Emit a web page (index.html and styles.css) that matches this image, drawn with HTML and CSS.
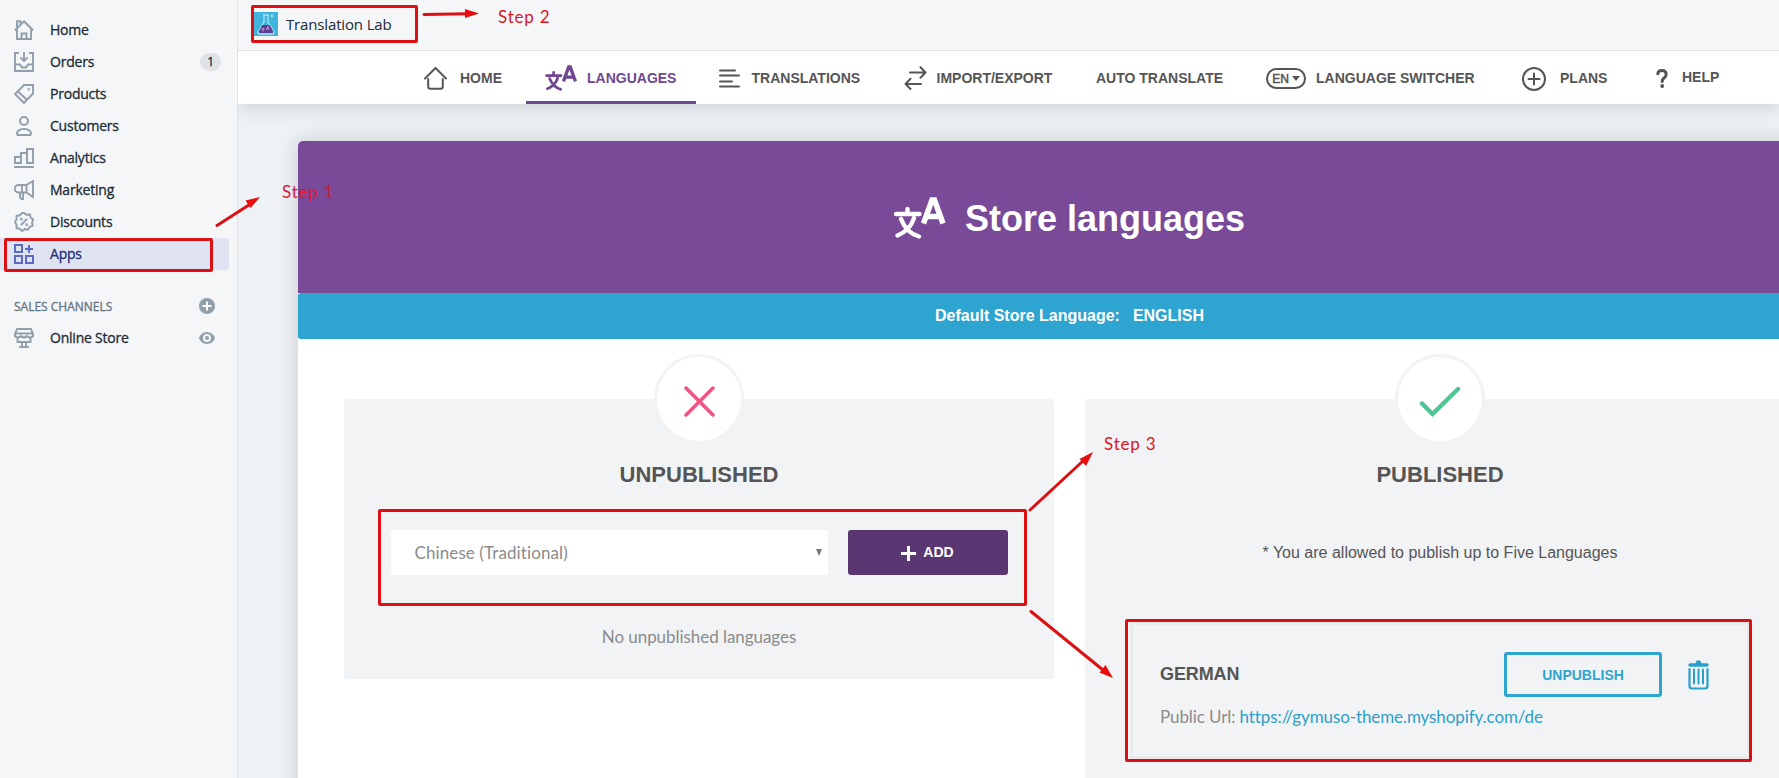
FILE: index.html
```html
<!DOCTYPE html>
<html lang="en">
<head>
<meta charset="utf-8">
<title>Translation Lab</title>
<link rel="stylesheet" href="styles.css">
</head>
<body>
<div class="app">
  <aside class="sidebar">
    <ul class="menu">
      <li><svg class="ico" viewBox="0 0 20 20"><path d="M.8 10.500 10 1.300l9.200 9.200M3 9.500V19h14V9.500M7.500 19v-5.500h5V19M3 7.500V1.200h3.500V4"/></svg><span>Home</span></li>
      <li><svg class="ico" viewBox="0 0 20 20"><path d="M5 1H1v18h18V1h-4M1 12.500h5l2 3h4l2-3h5M10 0v8.500M6.500 5.500 10 9l3.500-3.500"/></svg><span>Orders</span><b class="count">1</b></li>
      <li><svg class="ico" viewBox="0 0 20 20"><path d="M10 1h9v8.500L10 19l-9-9zM4 7.500l9 8.500"/><circle cx="14.800" cy="5.300" r=".4"/></svg><span>Products</span></li>
      <li><svg class="ico" viewBox="0 0 20 20"><circle cx="10" cy="5" r="4"/><path d="M3.500 19c-2-4 3-6 6.500-6s8.500 2 6.500 6z"/></svg><span>Customers</span></li>
      <li><svg class="ico" viewBox="0 0 20 20"><path d="M1 15V9h6v6zM7 15V5h6v10M13 15V1h6v14zM0 19h20"/></svg><span>Analytics</span></li>
      <li><svg class="ico" viewBox="0 0 20 20"><path d="M12.500 5H4.500a3.700 3.700 0 0 0 0 7.500h8L19 17V1zM12.500 5v7.500M6 13v3.500q0 2.500 2.500 2.500H9v-6M8 5v7.500"/></svg><span>Marketing</span></li>
      <li><svg class="ico" viewBox="0 0 20 20"><path d="m10 1 2.600 1.800 3.200-.2.900 3.100 2.500 2-1.100 2.800.6 3.200-3 1.200-1.700 2.800-3.100-.6L8 19l-2.300-2.300-3.200-.6.100-3.200L.900 10l1.700-2.700-.1-3.300 3.200-.7L8 1z"/><path d="m6.800 13.200 6.400-6.400"/><circle cx="7.300" cy="7.300" r=".5"/><circle cx="12.700" cy="12.700" r=".5"/></svg><span>Discounts</span></li>
      <li class="active"><svg class="ico" viewBox="0 0 20 20"><path d="M1 1h7v7H1zM1 12h7v7H1zM12 12h7v7h-7zM15 1v8M11 5h8"/></svg><span>Apps</span></li>
    </ul>
    <div class="section"><span>SALES CHANNELS</span>
      <svg class="plus" viewBox="0 0 16 16"><circle cx="8" cy="8" r="8"/><path d="M8 3.500v9M3.500 8h9"/></svg></div>
    <ul class="menu">
      <li><svg class="ico" viewBox="0 0 20 20"><path d="M3 1h14l2 5v2q-3 3-6 0-3 3-6 0-3 3-6 0V6zM1 5.500h18M3.500 9.500V14h13V9.500M8 14v5M12 14v5M5 19h10"/></svg><span>Online Store</span>
        <svg class="eye" viewBox="0 0 16 12"><path d="M8 0C4 0 1 3 0 6c1 3 4 6 8 6s7-3 8-6c-1-3-4-6-8-6zm0 10a4 4 0 1 1 0-8 4 4 0 0 1 0 8z"/><circle cx="8" cy="6" r="2"/></svg></li>
    </ul>
  </aside>

  <div class="page">
    <header class="topbar">
      <svg class="logo" viewBox="0 0 24 24"><rect width="24" height="24" fill="#3fb4dc"/><path d="M9 3h6M10 3v7L4 20q0 2 2 2h12q2 0 2-2L14 10V3" fill="none" stroke="#a9e2f5" stroke-width="1.300"/><path d="M8.300 13h7.400l3.500 6.500q0 1.500-1.500 1.500H6.300q-1.500 0-1.500-1.500z" fill="#5b3c94"/><path d="m12.500 18 1.200-3.500 1.300 3.500M7.500 17h3M9 16v3.500" fill="none" stroke="#e3b6ee" stroke-width=".8"/><path d="M18 2.500v3M16.500 4h3" stroke="#b9ebfa"/></svg>
      <span>Translation Lab</span>
    </header>

    <nav class="tabs">
      <a class="tab"><span class="glyph g-home"><svg width="23" height="23" viewBox="0 0 23 23"><path d="m1 11.500 10.500-10.500L22 11.500M4.200 12v7.500q0 2.300 2.300 2.300h10q2.300 0 2.300-2.300V12"/></svg></span>HOME</a>
      <a class="tab current"><span class="glyph g-lang"><svg width="32" height="26" viewBox="0 0 52 42"><use href="#lang"/></svg></span>LANGUAGES</a>
      <a class="tab"><span class="glyph g-lines"><svg width="21" height="19" viewBox="0 0 21 19"><path d="M1 1.500h15M1 6.500h19M1 12.500h12M1 17.500h19"/></svg></span>TRANSLATIONS</a>
      <a class="tab"><span class="glyph g-swap"><svg width="23" height="24" viewBox="0 0 23 24"><path d="M6 6.500h15.500M16.500 1.300l5 5.200-5 5.200M17 18H1.500M6.500 12.800 1.500 18l5 5"/></svg></span>IMPORT/EXPORT</a>
      <a class="tab">AUTO TRANSLATE</a>
      <a class="tab"><span class="glyph g-en"><span class="en">EN<i></i></span></span>LANGUAGE SWITCHER</a>
      <a class="tab"><span class="glyph g-plan"><svg width="24" height="24" viewBox="0 0 24 24"><circle cx="12" cy="12" r="11"/><path d="M12 6.500v11M6.500 12h11"/></svg></span>PLANS</a>
      <a class="tab help"><span class="glyph g-help"><svg width="12" height="19" viewBox="0 0 12 19"><path d="M1.800 4.800Q2 1.500 6 1.500t4.200 3.700Q10.200 7.500 8 9 6.200 10.300 6.200 12.500" stroke-width="3"/><circle class="dot" cx="6.200" cy="17" r="1.900"/></svg></span>HELP</a>
    </nav>

    <main class="card">
      <div class="hero">
        <svg width="53" height="42" viewBox="0 0 52 42"><g id="lang" fill="none" stroke="currentColor" stroke-width="4.400" stroke-linecap="round" stroke-linejoin="round"><path d="M2.500 17h23.500M14 12v5M7.500 22q5.500 14 18 17.500M20.500 21Q17 33 4 38.500"/><path d="M30 26.500 38.500 3h2.500l8.500 23.500M33 19.500h13" stroke-width="5.500" stroke-linecap="butt" stroke-linejoin="miter"/></g></svg>
        <h1>Store languages</h1>
      </div>
      <div class="default"><span>Default Store Language:</span><span>ENGLISH</span></div>

      <div class="columns">
        <section class="panel short">
          <div class="badge no"><svg width="31" height="31" viewBox="0 0 31 31"><path d="m2 2 27 27M29 2 2 29"/></svg></div>
          <h2>UNPUBLISHED</h2>
          <div class="add-row">
            <div class="select"><span>Chinese (Traditional)</span><i></i></div>
            <button class="add"><svg width="15" height="15" viewBox="0 0 15 15"><path d="M7.500 0v15M0 7.500h15"/></svg>ADD</button>
          </div>
          <p class="empty">No unpublished languages</p>
        </section>

        <section class="panel">
          <div class="badge yes"><svg width="42" height="32" viewBox="0 0 42 32"><path d="m3 17.500 10.500 10.500L39 3"/></svg></div>
          <h2>PUBLISHED</h2>
          <p class="note">* You are allowed to publish up to Five Languages</p>
          <div class="language">
            <div class="info">
              <h3>GERMAN</h3>
              <p>Public Url: <a>https://gymuso-theme.myshopify.com/de</a></p>
            </div>
            <button class="unpublish">UNPUBLISH</button>
            <svg class="trash" width="21" height="30" viewBox="0 0 21 30"><path d="M2 5h17" stroke-width="3.400"/><circle cx="10.500" cy="3" r="2.700"/><path d="M1.500 9v17q0 2.500 2.500 2.500h13q2.500 0 2.500-2.500V9" stroke-width="2.200"/><path d="M6 9.500v14M10.500 9.500v14M15 9.500v14" stroke-width="2"/></svg>
          </div>
        </section>
      </div>
    </main>
  </div>

  <div class="frame frame-apps"></div>
  <div class="frame frame-title"></div>
  <div class="frame frame-add"></div>
  <div class="frame frame-german"></div>
  <svg class="arrows" width="1779" height="778" viewBox="0 0 1779 778">
    <path d="M217 225.500 252 203M424 14.500 468 13.700M1030 510 1084 460M1031 611.500 1103 670"/>
    <path class="head" d="m260 197-14.500 3.500 5 7.500zM479 13.500 465 9v9zM1093 452l-13.500 7 6.500 7zM1113 678l-7.500-13-6 7.500z"/>
  </svg>
  <span class="step step1">Step 1</span>
  <span class="step step2">Step 2</span>
  <span class="step step3">Step 3</span>
</div>
</body>
</html>
```
FILE: styles.css
```css
* { box-sizing: border-box; }
body { margin: 0; overflow: hidden; }
h1, h2, h3, p, ul { margin: 0; padding: 0; }
.app {
  position: relative;
  display: flex;
  width: 1779px;
  height: 778px;
  overflow: hidden;
  background: #f4f6f8;
  font-family: "Liberation Sans", sans-serif;
}

/* Sidebar */
.sidebar {
  flex: 0 0 238px;
  padding-top: 14px;
  border-right: 1px solid #dfe3e8;
  font-family: "Open Sans", "Noto Sans", sans-serif;
  color: #212b36;
}
.menu { list-style: none; }
.menu li {
  display: flex;
  align-items: center;
  width: 229px;
  height: 32px;
  padding: 0 14px;
  font-size: 14px;
  font-weight: 400;
  line-height: 20px;
  letter-spacing: -.22px;
  -webkit-text-stroke: .3px currentColor;
}
.menu span { flex: 1; margin-left: 16px; }
.ico {
  width: 20px;
  height: 20px;
  fill: none;
  stroke: #919eab;
  stroke-width: 1.9;
}
.menu .active {
  background: #e0e3f1;
  border-radius: 0 3px 3px 0;
  color: #202e78;
}
.active .ico { stroke: #5c6ac4; stroke-width: 2; fill: none; }
.count {
  width: 21px;
  height: 18px;
  margin-right: -6px;
  border-radius: 9px;
  background: #dfe3e8;
  font-size: 12px;
  font-weight: 500;
  line-height: 18px;
  text-align: center;
}
.section {
  display: flex;
  align-items: center;
  justify-content: space-between;
  height: 32px;
  margin-top: 20px;
  padding: 0 22px 0 14px;
  font-size: 12px;
  -webkit-text-stroke: .3px currentColor;
  color: #637381;
}
.plus { width: 16px; height: 16px; fill: #919eab; }
.plus path { stroke: #fff; stroke-width: 2; }
.eye { width: 16px; height: 12px; fill: #919eab; }

/* Top bar and tabs */
.page { flex: 1; min-width: 0; background: #eef2f5; }
.topbar {
  display: flex;
  align-items: center;
  gap: 8px;
  height: 51px;
  padding: 0 0 3px 16px;
  border-bottom: 1px solid #dfe1e4;
  background: #f4f6f8;
  font-family: "Open Sans", "Noto Sans", sans-serif;
  font-size: 15px;
  letter-spacing: -.15px;
  color: #212b36;
}
.logo { width: 24px; height: 24px; }
.tabs {
  display: grid;
  grid-template-columns: 121px 174px 185px 193px 169px 256px 134px 120px;
  height: 53px;
  padding-left: 167px;
  background: #fff;
  box-shadow: 0 2px 20px rgba(60, 70, 80, .22);
  clip-path: inset(0 0 -40px 0);
}
.tab {
  display: flex;
  align-items: center;
  height: 53px;
  padding: 0 0 0 19px;
  font-size: 14px;
  font-weight: bold;
  color: #555;
  white-space: nowrap;
}
.current {
  width: 170px;
  border-bottom: 3px solid #704791;
  color: #704791;
  padding-top: 3px;
}
.help { padding-top: 0; }
.tab:nth-child(5) { padding-left: 18px; }
.glyph { display: flex; flex: none; }
.glyph svg { fill: none; stroke: currentColor; stroke-width: 2; stroke-linecap: round; stroke-linejoin: round; }
.glyph .dot { fill: currentColor; stroke: none; }
.g-home { width: 36px; padding-top: 2px; }
.g-lang { width: 42px; }
.g-lines { width: 32.500px; padding-top: 1px; }
.g-swap { width: 32.500px; }
.g-en { width: 50px; padding-top: 2px; }
.g-plan { width: 38px; padding-top: 2px; }
.g-help { width: 26px; padding-top: 2px; }
.help { padding-bottom: 1px; }
.en {
  display: flex;
  align-items: center;
  justify-content: center;
  gap: 3px;
  width: 40px;
  height: 21px;
  border: 2px solid #555;
  border-radius: 11px;
  font-size: 12px;
  font-weight: 500;
  -webkit-text-stroke: .5px #555;
}
.en i { border: 4px solid transparent; border-top: 5px solid #555; border-bottom: 0; }

/* Store languages card */
.card {
  width: 1542px;
  height: 760px;
  margin: 37px 0 0 60px;
  border-radius: 5px;
  background: #fff;
  box-shadow: 0 0 20px rgba(60, 60, 70, .22);
}
.hero {
  display: flex;
  align-items: center;
  justify-content: center;
  gap: 19px;
  height: 152px;
  padding-top: 2px;
  border-radius: 5px 5px 0 0;
  background: #784a97;
  color: #fff;
}
.hero h1 { padding-top: 1px; font-size: 36px; line-height: 42px; }
.default {
  display: flex;
  align-items: center;
  justify-content: center;
  gap: 13px;
  height: 46px;
  padding: 0 0 1px 1px;
  border-radius: 3px;
  background: #2ea4d0;
  font-size: 16px;
  font-weight: bold;
  color: #fff;
}
.columns { display: flex; gap: 31px; padding: 60px 0 0 46px; }
.panel {
  display: flex;
  flex-direction: column;
  align-items: center;
  width: 710px;
  height: 500px;
  border-radius: 3px;
  background: #f2f3f5;
}
.short { height: 280px; }
.badge {
  display: flex;
  flex: none;
  align-items: center;
  justify-content: center;
  width: 90px;
  height: 90px;
  margin-top: -45px;
  padding-top: 5px;
  border: 3px solid #f2f3f5;
  border-radius: 50%;
  background: #fff;
}
.badge svg { fill: none; stroke-linecap: round; }
.no svg { stroke: #ee5582; stroke-width: 3.5; }
.yes svg { stroke: #4fc593; stroke-width: 4.4; }
.panel h2 { margin-top: 18px; font-size: 22px; line-height: 26px; color: #555; }
.add-row { display: flex; gap: 20px; margin-top: 42px; width: 617px; height: 45px; }
.select {
  display: flex;
  align-items: center;
  justify-content: space-between;
  width: 437px;
  padding: 0 6px 0 24px;
  border-radius: 3px;
  background: #fff;
  font: 17px Lato, sans-serif;
  font-variant-ligatures: none;
  letter-spacing: .1px;
  color: #8b8b8b;
}
.select i { border: 3.5px solid transparent; border-top: 7px solid #777; border-bottom: 0; }
.add {
  display: flex;
  align-items: center;
  justify-content: center;
  gap: 7px;
  width: 160px;
  padding: 0 0 1px;
  border: 0;
  border-radius: 3px;
  background: #5a3672;
  font: bold 14px "Liberation Sans", sans-serif;
  color: #fff;
}
.add svg { position: relative; top: 1px; stroke: #fff; stroke-width: 3; }
.empty { margin-top: 49px; font: 17px/26px Lato, sans-serif; letter-spacing: -.05px; color: #8b8b8b; }
.note { margin-top: 53px; font-size: 16px; line-height: 24px; color: #555; }
.language {
  display: flex;
  width: 620px;
  height: 137px;
  margin-top: 57px;
  padding: 27px 0 0 27px;
  border: 3px solid #e9eaec;
}
.info { width: 344px; white-space: nowrap; }
.info h3 { margin-top: 11px; font-size: 18px; letter-spacing: -.1px; line-height: 22px; color: #555; }
.info p { margin-top: 20px; font: 17px/24px Lato, sans-serif; letter-spacing: -.1px; color: #8b8b8b; }
.info a { color: #2f9fc9; }
.unpublish {
  flex: none;
  width: 158px;
  height: 45px;
  border: 3px solid #2ea4d0;
  border-radius: 3px;
  background: transparent;
  font: bold 14px "Liberation Sans", sans-serif;
  color: #2ea4d0;
}
.trash { margin: 8px 0 0 26px; fill: none; stroke: #2a9fcc; stroke-linecap: round; }
.trash circle { fill: #2a9fcc; stroke: none; }

/* Walkthrough annotations, layered over the page */
.frame { position: absolute; border: 3px solid #dc1012; border-radius: 2px; }
.frame-apps { left: 4px; top: 238px; width: 209px; height: 34px; }
.frame-title { left: 251px; top: 5px; width: 167px; height: 38px; }
.frame-add { left: 378px; top: 509px; width: 649px; height: 97px; }
.frame-german { left: 1125px; top: 619px; width: 627px; height: 143px; }
.arrows { position: absolute; left: 0; top: 0; fill: none; stroke: #dc1012; stroke-width: 3; stroke-linecap: round; }
.head { fill: #e80c0e; stroke: none; }
.step { position: absolute; font: 17px/20px Lato, sans-serif; letter-spacing: .8px; color: #d9161b; }
.step1 { left: 282px; top: 182px; color: #e01638; }
.step2 { left: 498px; top: 7px; }
.step3 { left: 1104px; top: 434px; }
```
